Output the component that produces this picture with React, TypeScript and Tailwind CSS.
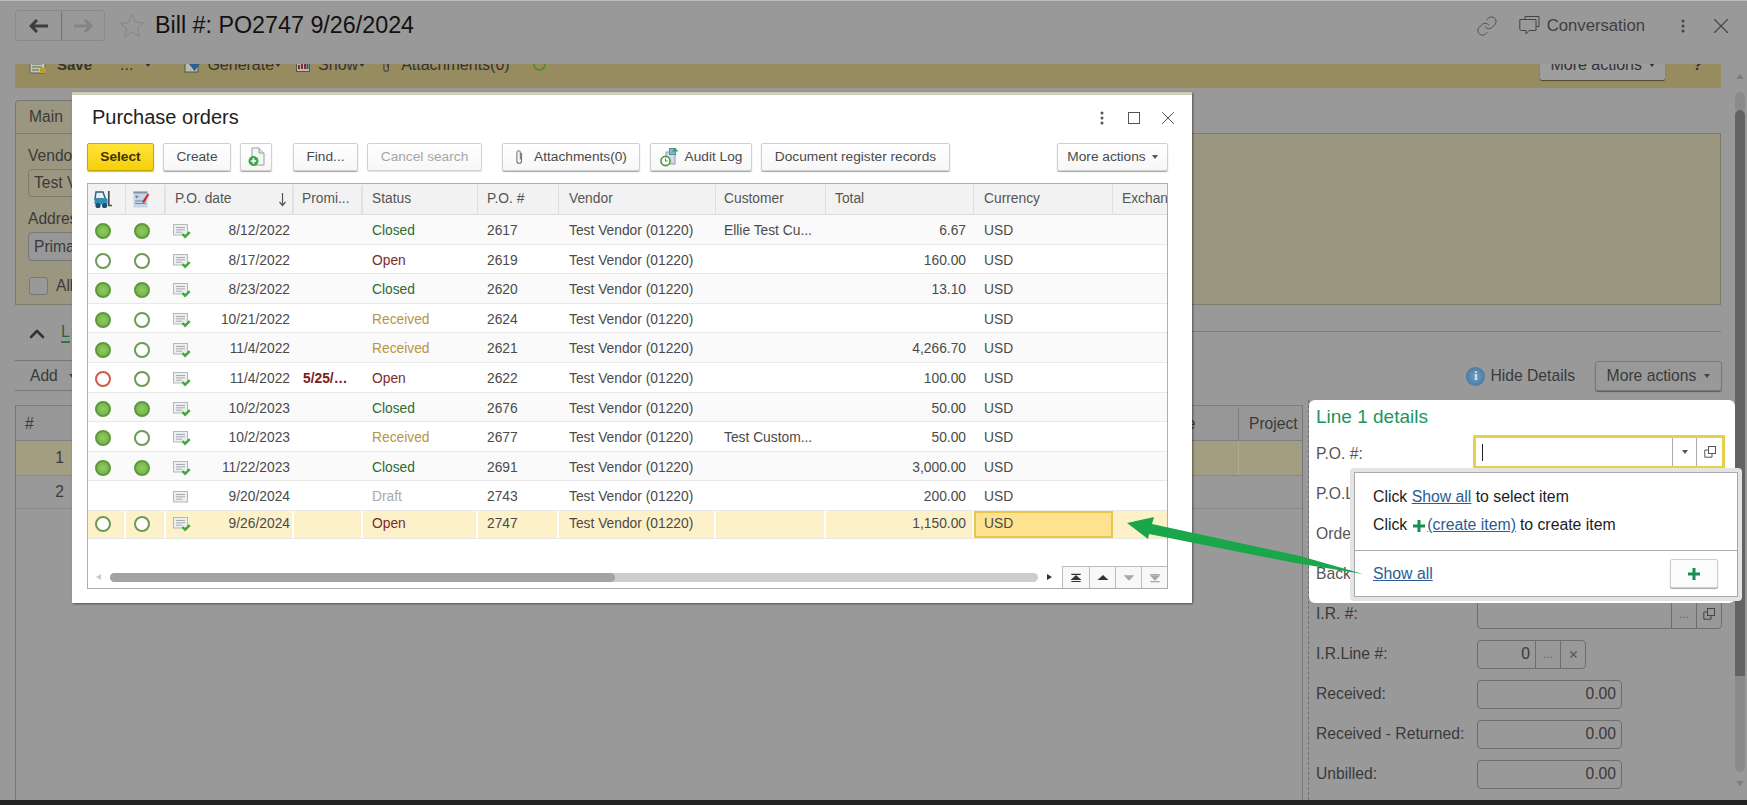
import React from "react";
import { ChevronUp, Link as LinkIcon, X } from "lucide-react";

const cols = "grid grid-cols-[38px_40px_128px_69px_115px_81px_157px_110px_148px_139px_54px]";

type Dot = "f" | "o" | "r" | "n";
type Row = { a: Dot; b: Dot; date: string; prom?: string; status: string; po: string; cust?: string; total?: string; draft?: boolean };

const rows: Row[] = [
  { a: "f", b: "f", date: "8/12/2022", status: "Closed", po: "2617", cust: "Ellie Test Cu...", total: "6.67" },
  { a: "o", b: "o", date: "8/17/2022", status: "Open", po: "2619", total: "160.00" },
  { a: "f", b: "f", date: "8/23/2022", status: "Closed", po: "2620", total: "13.10" },
  { a: "f", b: "o", date: "10/21/2022", status: "Received", po: "2624" },
  { a: "f", b: "o", date: "11/4/2022", status: "Received", po: "2621", total: "4,266.70" },
  { a: "r", b: "o", date: "11/4/2022", prom: "5/25/…", status: "Open", po: "2622", total: "100.00" },
  { a: "f", b: "f", date: "10/2/2023", status: "Closed", po: "2676", total: "50.00" },
  { a: "f", b: "o", date: "10/2/2023", status: "Received", po: "2677", cust: "Test Custom...", total: "50.00" },
  { a: "f", b: "f", date: "11/22/2023", status: "Closed", po: "2691", total: "3,000.00" },
  { a: "n", b: "n", date: "9/20/2024", status: "Draft", po: "2743", total: "200.00", draft: true },
];

function StatusDot({ kind }: { kind: Dot }) {
  if (kind === "n") return <span className="block h-[16px] w-[16px]" />;
  if (kind === "f")
    return <span className="block h-[16px] w-[16px] rounded-full border-2 border-[#5e9a3c] bg-radial from-[#8fcb62] to-[#6eb046]" />;
  if (kind === "r") return <span className="block h-[16px] w-[16px] rounded-full border-[2.5px] border-[#cf5a48] bg-white" />;
  return <span className="block h-[16px] w-[16px] rounded-full border-[2.5px] border-[#6d9a55] bg-white" />;
}

function Caret({ color = "border-t-[#444]" }: { color?: string }) {
  return <span className={`block h-0 w-0 shrink-0 border-x-[3px] border-t-[4px] border-x-transparent ${color}`} />;
}

function DocIcon({ check = true }: { check?: boolean }) {
  return (
    <svg width="18" height="16" viewBox="0 0 18 16" className="shrink-0">
      <rect x="0.5" y="1.5" width="14" height="10.5" fill="#eceef0" stroke="#b4b7bb" />
      <path d="M3 4.5h9M3 6.8h9M3 9.2h6" stroke="#a8abb0" strokeWidth="1" />
      {check && <path d="M9.5 11l2.6 2.8 4.6-4.6" fill="none" stroke="#3fa83a" strokeWidth="2.4" />}
    </svg>
  );
}

function statusClass(s: string) {
  if (s === "Closed") return "text-[#2f6b33]";
  if (s === "Open") return "text-[#7c2b2b]";
  if (s === "Received") return "text-[#b8963f]";
  return "text-[#aaaaaa]";
}

function Cell({ className = "", children }: { className?: string; children?: React.ReactNode }) {
  return <div className={`flex items-center overflow-hidden whitespace-nowrap ${className}`}>{children}</div>;
}

function GridRow({ r, stripe }: { r: Row; stripe: boolean }) {
  return (
    <div className={`${cols} h-[29.6px] border-b border-[#e8e8e8] pt-[4px] text-[13.8px] text-[#4a4a4a] ${stripe ? "bg-[#fafafa]" : "bg-white"}`}>
      <Cell className="pl-[7px]"><StatusDot kind={r.a} /></Cell>
      <Cell className="pl-[8px]"><StatusDot kind={r.b} /></Cell>
      <Cell className="justify-between pl-[7px] pr-[4px]"><DocIcon check={!r.draft} /><span>{r.date}</span></Cell>
      <Cell className="pl-[9px] font-bold text-[#7a1b1b]">{r.prom}</Cell>
      <Cell className={`pl-[9px] ${statusClass(r.status)}`}>{r.status}</Cell>
      <Cell className="pl-[9px]">{r.po}</Cell>
      <Cell className="pl-[10px]">Test Vendor (01220)</Cell>
      <Cell className="pl-[8px]">{r.cust}</Cell>
      <Cell className="justify-end pr-[8px]">{r.total}</Cell>
      <Cell className="pl-[10px]">USD</Cell>
      <Cell />
    </div>
  );
}

function SelectedRow() {
  const gap = "border-r-2 border-white";
  return (
    <div className={`${cols} h-[28px] border-b border-[#e8e8e8] bg-[#fdf1c9] text-[13.8px] text-[#4a4a4a]`}>
      <Cell className={`pl-[7px] ${gap}`}><StatusDot kind="o" /></Cell>
      <Cell className={`pl-[8px] ${gap}`}><StatusDot kind="o" /></Cell>
      <Cell className={`justify-between pl-[7px] pr-[2px] ${gap}`}><DocIcon /><span>9/26/2024</span></Cell>
      <Cell className={gap} />
      <Cell className={`pl-[9px] text-[#7c2b2b] ${gap}`}>Open</Cell>
      <Cell className={`pl-[9px] ${gap}`}>2747</Cell>
      <Cell className={`pl-[10px] ${gap}`}>Test Vendor (01220)</Cell>
      <Cell className={gap} />
      <Cell className={`justify-end pr-[6px] ${gap}`}>1,150.00</Cell>
      <Cell className="border-2 border-[#e9c74d] bg-[#fde38f] pl-[8px]">USD</Cell>
      <Cell />
    </div>
  );
}

function Btn({ w, children, disabled }: { w: string; children: React.ReactNode; disabled?: boolean }) {
  return (
    <button
      className={`flex h-[28px] shrink-0 items-center justify-center gap-[6px] rounded-[2px] border border-[#d0d0d0] bg-linear-to-b from-white to-[#f7f7f7] text-[13.7px] ${w} ${disabled ? "text-[#a6a6a6] shadow-[0_1px_1px_rgba(0,0,0,0.12)]" : "text-[#4a4a4a] shadow-[0_1px_1px_rgba(0,0,0,0.35)]"}`}
    >
      {children}
    </button>
  );
}

function Clip({ color = "#777" }: { color?: string }) {
  return (
    <svg width="9" height="16" viewBox="0 0 9 16" className="shrink-0">
      <path d="M6.5 4v8a2.3 2.3 0 0 1-4.6 0V3.4a1.7 1.7 0 0 1 3.4 0V10.5" fill="none" stroke={color} strokeWidth="1.1" />
    </svg>
  );
}

function Forklift() {
  return (
    <svg width="18" height="19" viewBox="0 0 18 19">
      <path d="M2 2h7l2.5 7H1z" fill="#e6eef2" stroke="#2b5d7e" strokeWidth="1.4" />
      <rect x="0.5" y="8.5" width="13" height="6" rx="1" fill="#2f8fb8" />
      <path d="M14.8 1v14.5H18" stroke="#4c4c4c" strokeWidth="1.7" fill="none" />
      <circle cx="4" cy="15.5" r="2.6" fill="#1f4f6d" />
      <circle cx="10.6" cy="15.5" r="2.6" fill="#1f4f6d" />
    </svg>
  );
}

function DocPencil() {
  return (
    <svg width="17" height="17" viewBox="0 0 17 17">
      <rect x="0.5" y="0.5" width="14" height="16" fill="#c4d5e8" />
      <rect x="0.5" y="0.5" width="14" height="2" fill="#7f93aa" />
      <path d="M2 5.5h4M3.500 4.500v3M2 10h11M2 12.500h11" stroke="#6d7f95" strokeWidth="0.9" />
      <path d="M9 11l5.600-8.500 1.800 1.100L11 12z" fill="#d8232a" />
    </svg>
  );
}

function CreateIcon() {
  return (
    <svg width="17" height="20" viewBox="0 0 17 20">
      <path d="M4 1h7l5 5v12H4z" fill="#f4f6f2" stroke="#9aa0a0" />
      <path d="M11 1v5h5" fill="#dfe3dc" stroke="#9aa0a0" />
      <circle cx="5.500" cy="14" r="5" fill="#3fa34d" />
      <path d="M5.500 11.300v5.400M2.800 14h5.400" stroke="#fff" strokeWidth="1.700" />
    </svg>
  );
}

function AuditIcon() {
  return (
    <svg width="19" height="20" viewBox="0 0 19 20" className="shrink-0">
      <rect x="6" y="5" width="9" height="12" fill="#d3dde6" stroke="#8c9aa8" />
      <rect x="9.500" y="1.500" width="6" height="6" fill="#7fb7d6" stroke="#5f8ba5" />
      <path d="M12 4.500l3-3.500 3.500 3.500" fill="#3aa04a" />
      <circle cx="5.500" cy="14" r="4.600" fill="#fff" stroke="#4c9a49" strokeWidth="1.700" />
      <path d="M5.500 11.500V14h2.300" stroke="#4c9a49" strokeWidth="1.100" fill="none" />
    </svg>
  );
}

function NavGlyph({ dir, bar, dim }: { dir: "up" | "down"; bar?: boolean; dim?: boolean }) {
  const c = dim ? "#a8a8a8" : "#333";
  return (
    <svg width="14" height="10" viewBox="0 0 18 11">
      {dir === "up" ? <path d="M9 1.500L16 8H2z" fill={c} /> : <path d="M2 2h14L9 9z" fill={c} />}
      {bar && <path d={dir === "up" ? "M3 .8h12M3 10h12" : "M3 1h12M3 10.200h12"} stroke={c} strokeWidth="1.600" />}
    </svg>
  );
}

function CopyGlyph({ color = "#444" }: { color?: string }) {
  return (
    <svg width="12" height="12" viewBox="0 0 12 12">
      <rect x="4.500" y="0.500" width="7" height="7" fill="none" stroke={color} />
      <path d="M4 4H0.800v7.200H8V8" fill="none" stroke={color} />
    </svg>
  );
}

function Dots({ color = "#444" }: { color?: string }) {
  return (
    <svg width="4" height="14" viewBox="0 0 4 14" className="shrink-0">
      <circle cx="2" cy="2" r="1.500" fill={color} />
      <circle cx="2" cy="7" r="1.500" fill={color} />
      <circle cx="2" cy="12" r="1.500" fill={color} />
    </svg>
  );
}

function Purchase() {
  return (
    <div className="absolute left-[72px] top-[92px] z-10 flex h-[511px] w-[1120px] flex-col border-t-[3px] border-[#cfcdb9] bg-white pl-[15px] pr-[24px] shadow-[1px_1px_2px_rgba(0,0,0,0.45)]">
      <div className="flex h-[48px] shrink-0 items-start justify-between pt-[8px]">
        <h1 className="pl-[5px] text-[20px] leading-[28px] text-[#222]">Purchase orders</h1>
        <div className="flex items-center pt-[4px]">
          <Dots color="#555" />
          <span className="ml-[24px] block h-[12px] w-[12px] border border-[#555]" />
          <X size={22} strokeWidth={1} className="ml-[17px] mr-[-11px] text-[#444]" />
        </div>
      </div>

      <div className="flex h-[28px] shrink-0 items-center">
        <button className="flex h-[28px] w-[67px] items-center justify-center rounded-[2px] border border-[#c9a900] bg-linear-to-b from-[#ffe437] to-[#f6cf00] text-[13.7px] font-bold text-[#3e3300] shadow-[0_1px_1px_rgba(0,0,0,0.3)]">Select</button>
        <div className="ml-[9px]"><Btn w="w-[68px]">Create</Btn></div>
        <div className="ml-[9px]"><Btn w="w-[32px]"><CreateIcon /></Btn></div>
        <div className="ml-[21px]"><Btn w="w-[65px]">Find...</Btn></div>
        <div className="ml-[9px]"><Btn w="w-[115px]" disabled>Cancel search</Btn></div>
        <div className="ml-[20px]"><Btn w="w-[138px]"><Clip /><span className="ml-[4px]">Attachments(0)</span></Btn></div>
        <div className="ml-[10px]"><Btn w="w-[102px]"><AuditIcon /><span>Audit Log</span></Btn></div>
        <div className="ml-[9px]"><Btn w="w-[189px]">Document register records</Btn></div>
        <div className="ml-auto"><Btn w="w-[111px]">More actions<Caret color="border-t-[#555]" /></Btn></div>
      </div>

      <div className="mt-[12px] flex h-[406px] w-[1081px] shrink-0 flex-col overflow-hidden border border-[#aeaeae]">
        <div className={`${cols} h-[31px] shrink-0 border-b border-[#dcdcdc] bg-[#f2f2f2] pt-[1px] text-[13.8px] text-[#555]`}>
          <Cell className="border-r border-[#dedede] pl-[6px]"><Forklift /></Cell>
          <Cell className="border-r-2 border-[#e2e2e2] pl-[7px]"><DocPencil /></Cell>
          <Cell className="justify-between border-r-2 border-[#e2e2e2] pl-[9px] pr-[5px]">
            <span>P.O. date</span>
            <svg width="9" height="15" viewBox="0 0 9 15"><path d="M4.500 1v12M1.500 10l3 3.500 3-3.500" fill="none" stroke="#555" strokeWidth="1.200" /></svg>
          </Cell>
          <Cell className="border-r-2 border-[#e2e2e2] pl-[8px]">Promi...</Cell>
          <Cell className="border-r border-[#dedede] pl-[9px]">Status</Cell>
          <Cell className="border-r border-[#dedede] pl-[9px]">P.O. #</Cell>
          <Cell className="border-r border-[#dedede] pl-[10px]">Vendor</Cell>
          <Cell className="border-r border-[#dedede] pl-[8px]">Customer</Cell>
          <Cell className="border-r border-[#dedede] pl-[9px]">Total</Cell>
          <Cell className="border-r border-[#dedede] pl-[10px]">Currency</Cell>
          <Cell className="pl-[9px]">Exchan</Cell>
        </div>
        {rows.map((r, i) => (
          <GridRow key={r.po} r={r} stripe={i % 2 === 0} />
        ))}
        <SelectedRow />
        <div className="mt-auto flex h-[22px] shrink-0 items-center">
          <span className="ml-[8px] block h-0 w-0 border-y-[3px] border-r-[5px] border-y-transparent border-r-[#c9c9c9]" />
          <div className="ml-[9px] h-[9px] w-[928px] rounded-full bg-[#cdcdcd]">
            <div className="h-full w-[505px] rounded-full bg-[#a3a3a3]" />
          </div>
          <span className="ml-[9px] block h-0 w-0 border-y-[3px] border-l-[5px] border-y-transparent border-l-[#333]" />
          <div className="ml-auto flex h-[22px] border-t border-[#bdbdbd]">
            <span className="flex w-[27px] items-center justify-center border-l border-[#bdbdbd] bg-[#f8f8f8]"><NavGlyph dir="up" bar /></span>
            <span className="flex w-[26px] items-center justify-center border-l border-[#bdbdbd] bg-[#f8f8f8]"><NavGlyph dir="up" /></span>
            <span className="flex w-[26px] items-center justify-center border-l border-[#bdbdbd] bg-[#f8f8f8]"><NavGlyph dir="down" dim /></span>
            <span className="flex w-[26px] items-center justify-center border-l border-[#bdbdbd] bg-[#f8f8f8]"><NavGlyph dir="down" bar dim /></span>
          </div>
        </div>
      </div>
    </div>
  );
}

function Header() {
  return (
    <header className="flex h-[64px] shrink-0 items-start border-t border-[#bdbdbd] bg-[#999999] pl-[15px] pr-[13px] pt-[9px]">
      <div className="flex h-[31px] w-[90px] overflow-hidden rounded-[3px] border border-[#8a8a8a]">
        <span className="flex w-[46px] items-center justify-center border-r border-[#777] shadow-[0_1px_1px_rgba(0,0,0,0.3)]">
          <svg width="20" height="14" viewBox="0 0 20 14"><path d="M8 1L2 7l6 6M2 7h17" fill="none" stroke="#3d3d3d" strokeWidth="3" /></svg>
        </span>
        <span className="flex flex-1 items-center justify-center">
          <svg width="20" height="14" viewBox="0 0 20 14"><path d="M12 1l6 6-6 6M18 7H1" fill="none" stroke="#848484" strokeWidth="3" /></svg>
        </span>
      </div>
      <svg width="26" height="25" viewBox="0 0 26 25" className="ml-[14px] mt-[3px] shrink-0">
        <path d="M13 1.500l3.400 7.400 8 .9-6 5.400 1.700 8L13 19l-7.100 4.700 1.700-8-6-5.400 8-.9z" fill="none" stroke="#8a8a8a" strokeWidth="1.200" />
      </svg>
      <h1 className="ml-[10px] whitespace-nowrap text-[23.3px] leading-[30px] text-[#111]">Bill #: PO2747 9/26/2024</h1>
      <div className="ml-auto flex items-center pt-[3px] text-[#3f3f3f]">
        <LinkIcon size={22} strokeWidth={1} className="text-[#4a4a4a]" />
        <svg width="21" height="22" viewBox="0 0 21 22" className="ml-[21px]">
          <path d="M6 4.500V1.500h14v10h-3" fill="none" stroke="#444" strokeWidth="1" />
          <path d="M0.800 4.500H17V15.500h-7l-3 3.500v-3.500H2.500a1.700 1.700 0 0 1-1.700-1.700z" fill="none" stroke="#444" strokeWidth="1" />
        </svg>
        <span className="ml-[7px] text-[16.7px] leading-[22px]">Conversation</span>
        <span className="ml-[36px]"><Dots /></span>
        <X size={26} strokeWidth={1} className="ml-[23px] text-[#444]" />
      </div>
    </header>
  );
}

function Band() {
  return (
    <div className="mr-[14px] h-[24px] shrink-0 overflow-hidden bg-[#978c60] text-[#333]">
      <div className="-mt-[15px] flex h-[31px] items-center text-[16px] leading-none">
        <svg width="18" height="18" viewBox="0 0 18 18" className="ml-[14px] shrink-0">
          <rect x="1" y="1" width="15" height="16" fill="#c2c6b2" stroke="#5d635a" />
          <path d="M3 8h10M3 11h10M3 14h7" stroke="#5d635a" />
          <path d="M11 12h6v5h-6z" fill="#b69f2e" />
          <path d="M12 3h5v4h-5z" fill="#4f8a4c" />
        </svg>
        <span className="ml-[10px] text-[15px] font-bold">Save</span>
        <span className="ml-[28px]">...</span>
        <span className="ml-[12px]"><Caret color="border-t-[#333]" /></span>
        <svg width="17" height="17" viewBox="0 0 17 17" className="ml-[33px] shrink-0">
          <rect x="1" y="1" width="13" height="15" fill="#b8bcae" stroke="#555" />
          <path d="M5 8h11l-5.500 7z" fill="#2f5f8f" />
        </svg>
        <span className="ml-[6px]">Generate</span><span className="ml-[1px]"><Caret color="border-t-[#333]" /></span>
        <svg width="14" height="15" viewBox="0 0 14 15" className="ml-[15px] shrink-0">
          <rect x="0.500" y="0.500" width="13" height="14" fill="#b9b9ae" stroke="#555" />
          <path d="M3 12V8M6 12V5M9 12V7" stroke="#7d2f2f" strokeWidth="2" />
          <path d="M11.500 12V6" stroke="#33567d" strokeWidth="2" />
        </svg>
        <span className="ml-[8px]">Show</span><span className="ml-[1px]"><Caret color="border-t-[#333]" /></span>
        <span className="ml-[17px]"><Clip color="#444" /></span>
        <span className="ml-[10px]">Attachments(0)</span>
        <span className="ml-[23px] block h-[13px] w-[13px] rounded-full border-2 border-[#5f8a2a]" />
        <div className="ml-auto flex h-[31px] w-[125px] shrink-0 items-center justify-center gap-[7px] rounded-[2px] bg-[#9e9e9e] shadow-[0_1px_1px_rgba(0,0,0,0.5)]">More actions<Caret color="border-t-[#333]" /></div>
        <span className="ml-[28px] mr-[18px] font-bold italic">?</span>
      </div>
    </div>
  );
}

function MainPanel() {
  return (
    <div className="mr-[14px] mt-[12px] shrink-0 text-[#3a3a3a]">
      <div className="flex h-[33px] w-[70px] items-center rounded-t-[4px] border border-b-0 border-[#777] bg-[#9a9680] pl-[13px] text-[15.6px]">Main</div>
      <div className="flex h-[172px] flex-col items-start border border-[#7d7b6c] bg-[#9a9680] pl-[12px] pt-[13px] text-[15.6px]">
        <span className="h-[18px] leading-[18px]">Vendor</span>
        <span className="mt-[4px] flex h-[28px] w-[200px] items-center rounded-[4px] border border-[#7d7b6c] pl-[5px] text-[#3a3a3a]">Test Vendor</span>
        <span className="mt-[13px] h-[18px] leading-[18px]">Address</span>
        <span className="mt-[4px] flex h-[29px] w-[200px] items-center rounded-[4px] border border-[#777] bg-[#979798] pl-[5px]">Primary</span>
        <div className="mt-[13px] flex items-center">
          <span className="ml-[1px] block h-[18px] w-[19px] rounded-[3px] border border-[#777] bg-[#999]" />
          <span className="ml-[8px]">Allow</span>
        </div>
      </div>
    </div>
  );
}

function Detail({ label, value, w, extra }: { label: string; value?: string; w: string; extra?: React.ReactNode }) {
  return (
    <div className="flex h-[40px] items-center pl-[7px]">
      <span className="w-[161px] shrink-0 whitespace-nowrap">{label}</span>
      <div className={`flex h-[29px] items-stretch rounded-[4px] border border-[#6e6e6e] ${w}`}>
        <span className="flex flex-1 items-center justify-end pr-[5px]">{value}</span>
        {extra}
      </div>
    </div>
  );
}

function Divs({ second }: { second: React.ReactNode }) {
  return (
    <>
      <span className="flex w-[25px] items-center justify-center border-l border-[#6e6e6e] text-[12px] text-[#666]">...</span>
      <span className="flex w-[25px] items-center justify-center border-l border-[#6e6e6e]">{second}</span>
    </>
  );
}

function DetailColumn() {
  return (
    <div className="flex h-full w-[427px] shrink-0 flex-col border-l border-dashed border-[#6f6f6f] text-[15.7px] text-[#3a3a3a]">
      <div className="relative z-10 h-[203px] shrink-0 rounded-[6px] bg-white text-[#555]">
        <div className="flex h-[34px] items-center pl-[7px] text-[19px] text-[#1d9560]">Line 1 details</div>
        <div className="flex h-[40px] items-start pl-[7px]">
          <span className="mt-[11px] w-[157px] shrink-0 leading-[18px]">P.O. #:</span>
          <div className="mt-[1px] flex h-[34px] w-[252px] border-[3px] border-[#e8d048]">
            <span className="flex flex-1 items-center pl-[6px]"><span className="block h-[17px] w-px bg-[#222]" /></span>
            <span className="flex w-[24px] items-center justify-center border-l border-[#aaa]"><Caret color="border-t-[#555]" /></span>
            <span className="flex w-[26px] items-center justify-center border-l border-[#aaa]"><CopyGlyph color="#555" /></span>
          </div>
        </div>
        <div className="flex h-[40px] items-center pl-[7px]">P.O.Line #:</div>
        <div className="flex h-[40px] items-center pl-[7px]">Order #:</div>
        <div className="flex h-[40px] items-center pl-[7px]">Backorder:</div>

        <div className="absolute left-[41px] top-[68px] w-[392px] rounded-[4px] border-[4px] border-[#e4e4e4] bg-white text-[#1c1c1c]">
          <div className="flex h-[125px] flex-col border border-[#a9a9a9]">
            <div className="flex h-[77px] flex-col pl-[18px] pt-[10px] text-[15.8px] leading-[28px]">
              <div>Click <a className="text-[#2b5c94] underline">Show all</a> to select item</div>
              <div className="flex items-center">
                Click
                <svg width="14" height="14" viewBox="0 0 14 14" className="ml-[5px] mt-[2px]"><path d="M7 1v12M1 7h12" stroke="#149150" strokeWidth="3" /></svg>
                <a className="ml-[1px] text-[#2b5c94] underline">(create item)</a>
                <span className="ml-[4px]">to create item</span>
              </div>
            </div>
            <div className="flex flex-1 items-center justify-between border-t border-[#a9a9a9] pl-[18px] pr-[19px]">
              <a className="text-[15.8px] text-[#2b5c94] underline">Show all</a>
              <span className="flex h-[29px] w-[48px] items-center justify-center rounded-[2px] border border-[#cfcfcf] bg-[#fbfbfb] shadow-[0_1px_1px_rgba(0,0,0,0.35)]">
                <svg width="14" height="14" viewBox="0 0 14 14"><path d="M7 1v12M1 7h12" stroke="#149150" strokeWidth="3" /></svg>
              </span>
            </div>
          </div>
        </div>
      </div>
      <div className="-mt-[9px] flex flex-col">
        <Detail label="I.R. #:" w="w-[245px]" extra={<Divs second={<CopyGlyph />} />} />
        <Detail label="I.R.Line #:" value="0" w="w-[109px]" extra={<Divs second={<X size={11} strokeWidth={2.5} className="text-[#555]" />} />} />
        <Detail label="Received:" value="0.00" w="w-[145px]" />
        <Detail label="Received - Returned:" value="0.00" w="w-[145px]" />
        <Detail label="Unbilled:" value="0.00" w="w-[145px]" />
        <div className="flex h-[40px] items-center pl-[7px]"><div className="ml-[161px] mt-[38px] h-[29px] w-[145px] shrink-0 rounded-[4px] border border-[#6e6e6e]" /></div>
      </div>
    </div>
  );
}

function Lower() {
  return (
    <>
      <div className="mr-[14px] flex h-[56px] shrink-0 items-start text-[#3a3a3a]">
        <div className="flex h-[56px] w-[70px] shrink-0 items-start border-b border-[#777] pl-[10px] pt-[17px]">
          <ChevronUp size={24} strokeWidth={2.6} className="text-[#333]" />
          <span className="ml-[12px] mt-[1px] border-b-2 border-[#2a7a4a] text-[16px] leading-[18px] text-[#1c6a3c]">L</span>
        </div>
        <div className="ml-[2px] h-[27px] flex-1 border-b border-[#7f7f7f]" />
      </div>
      <div className="flex h-[39px] shrink-0 text-[#3a3a3a]">
        <div className="flex h-[30px] w-[70px] items-center border-b border-[#777] pl-[15px] text-[15.6px]">
          Add<span className="ml-[11px]"><Caret /></span>
        </div>
        <div className="ml-auto mr-[13px] flex h-[30px] items-center text-[15.7px]">
          <span className="flex h-[19px] w-[19px] items-center justify-center rounded-full bg-radial from-[#6fa0c9] to-[#3c6a92] font-['Liberation_Serif',serif] text-[13px] font-bold text-[#d9e6ef]">i</span>
          <span className="ml-[5px]">Hide Details</span>
          <span className="ml-[20px] flex h-[30px] w-[127px] items-center justify-center gap-[8px] rounded-[3px] border border-[#777] shadow-[0_1px_1px_rgba(0,0,0,0.4)]">
            More actions<Caret />
          </span>
        </div>
      </div>
      <div className="flex min-h-0 flex-1 gap-[5px]">
        <div className="mt-[5px] flex w-[1288px] shrink-0 flex-col border-x border-[#777] text-[15.6px] text-[#3a3a3a]">
          <div className="flex h-[36px] shrink-0 items-center border-y border-[#7f7f7f] bg-[#979797] pt-[1px]">
            <span className="ml-[9px] flex w-[1213px] shrink-0">
              <span>#</span>
              <span className="ml-[1153px]">e</span>
            </span>
            <span className="flex h-full flex-1 items-center border-l border-[#7f7f7f] pl-[10px]">Project</span>
          </div>
          <div className="flex h-[35px] shrink-0 items-center border-b border-[#888] bg-[#a39d82]">
            <span className="w-[48px] text-right">1</span>
            <span className="ml-[1174px] h-full border-l border-[#b0aa90]" />
          </div>
          <div className="flex h-[33px] shrink-0 items-center border-b border-[#888]">
            <span className="w-[48px] text-right">2</span>
          </div>
        </div>
        <DetailColumn />
      </div>
    </>
  );
}

function Scrollbar() {
  return (
    <div className="flex w-[12px] shrink-0 flex-col items-start">
      <span className="ml-[1px] mt-[10px] block h-0 w-0 border-x-[4px] border-b-[5px] border-x-transparent border-b-[#7d7d7d]" />
      <div className="mt-[13px] h-[18px] w-[10px] rounded-t-full bg-[#8b8b8b]" />
      <div className="h-[572px] w-[10px] rounded-full bg-[#636363]" />
      <div className="-mt-[6px] h-[96px] w-[10px] rounded-b-full bg-[#8a8a8a]" />
      <span className="ml-[1px] mt-[9px] block h-0 w-0 border-x-[4px] border-t-[5px] border-x-transparent border-t-[#7d7d7d]" />
    </div>
  );
}

export default function App() {
  return (
    <div className="relative flex h-[805px] w-[1747px] flex-col overflow-hidden bg-[#999999] font-['Liberation_Sans',Arial,sans-serif]">
      <Header />
      <div className="flex min-h-0 flex-1">
        <main className="flex w-[1735px] shrink-0 flex-col overflow-visible pl-[15px]">
          <Band />
          <MainPanel />
          <Lower />
        </main>
        <Scrollbar />
      </div>
      <div className="relative z-0 h-[5px] shrink-0 bg-[#222222]" />
      <Purchase />
      <svg width="1747" height="805" viewBox="0 0 1747 805" className="pointer-events-none absolute inset-0 z-20">
        <polygon points="1127,523 1154,517 1152,524 1300,556 1363,574 1295,563 1149,534 1148,539" fill="#1aa64a" />
      </svg>
    </div>
  );
}
